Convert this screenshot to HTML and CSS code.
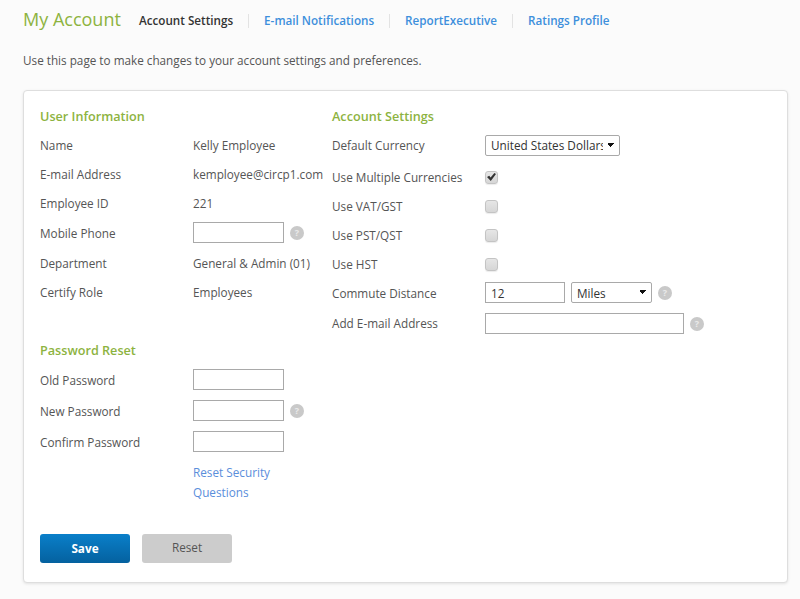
FILE: index.html
```html
<!DOCTYPE html>
<html lang="en">
<head>
<meta charset="utf-8">
<title>My Account</title>
<link rel="stylesheet" href="styles.css">
</head>
<body>
<header class="top">
  <h1 class="title">My Account</h1>
  <nav class="tabs">
    <a class="tab current">Account Settings</a>
    <a class="tab">E-mail Notifications</a>
    <a class="tab">ReportExecutive</a>
    <a class="tab">Ratings Profile</a>
  </nav>
</header>
<p class="intro">Use this page to make changes to your account settings and preferences.</p>
<main class="card">
  <div class="cols">
    <section class="col-left">
      <h2 class="head">User Information</h2>
      <div class="row r29"><span class="label">Name</span><span class="value">Kelly Employee</span></div>
      <div class="row r29"><span class="label">E-mail Address</span><span class="value">kemployee@circp1.com</span></div>
      <div class="row r29"><span class="label">Employee ID</span><span class="value">221</span></div>
      <div class="row r29"><span class="label low">Mobile Phone</span><input class="field short" type="text"><span class="help">?</span></div>
      <div class="row r31"><span class="label low">Department</span><span class="value low">General &amp; Admin (01)</span></div>
      <div class="row r29"><span class="label">Certify Role</span><span class="value">Employees</span></div>
      <h2 class="head second">Password Reset</h2>
      <div class="row r31"><span class="label low">Old Password</span><input class="field short" type="password"></div>
      <div class="row r31"><span class="label low">New Password</span><input class="field short" type="password"><span class="help">?</span></div>
      <div class="row r31"><span class="label low">Confirm Password</span><input class="field short" type="password"></div>
      <div class="links"><a class="link">Reset Security<br>Questions</a></div>
    </section>
    <section class="col-right">
      <h2 class="head">Account Settings</h2>
      <div class="row r29"><span class="label">Default Currency</span><select class="select currency"><option>United States Dollars</option></select></div>
      <div class="row r29 push"><span class="label">Use Multiple Currencies</span><input class="check" type="checkbox" checked></div>
      <div class="row r29"><span class="label">Use VAT/GST</span><input class="check" type="checkbox"></div>
      <div class="row r29"><span class="label">Use PST/QST</span><input class="check" type="checkbox"></div>
      <div class="row r29"><span class="label">Use HST</span><input class="check" type="checkbox"></div>
      <div class="row r27"><span class="label low">Commute Distance</span><input class="field dist" type="text" value="12"><select class="select miles"><option>Miles</option></select><span class="help">?</span></div>
      <div class="row r29 push"><span class="label">Add E-mail Address</span><input class="field email" type="text"><span class="help">?</span></div>
    </section>
  </div>
  <div class="actions">
    <button class="btn save" type="button">Save</button>
    <button class="btn reset" type="button">Reset</button>
  </div>
</main>
</body>
</html>
```
FILE: styles.css
```css
* { box-sizing: border-box; }
html, body { margin: 0; height: 599px; overflow: hidden; }
body {
  background: #fbfbfb;
  color: #555;
  font-family: "Open Sans", sans-serif;
  font-size: 11.75px;
  line-height: 16px;
}
.top {
  display: flex;
  align-items: flex-start;
  padding: 6px 0 0 23px;
  height: 36px;
}
.title {
  margin: 0;
  font-size: 18px;
  line-height: 26px;
  font-weight: 400;
  color: #8db33f;
  width: 116px;
}
.tabs { display: flex; margin-top: 8px; }
.tab {
  color: #3d8fdc;
  font-size: 11.68px;
  font-weight: 600;
  padding-right: 15px;
  margin-right: 15px;
  border-right: 1px solid #e3e3e3;
  line-height: 14px;
}
.tab:last-child { border-right: 0; }
.tab.current { color: #333; }
.intro {
  margin: 0;
  padding: 16px 0 0 23px;
  height: 54px;
  font-size: 11.72px;
}
.card {
  margin-left: 23px;
  width: 765px;
  height: 493px;
  background: #fff;
  border: 1px solid #dedede;
  border-radius: 4px;
  box-shadow: 0 1px 3px rgba(0,0,0,.1);
  padding: 16px 16px 0;
  display: flex;
  flex-direction: column;
}
.cols { display: flex; height: 427px; }
.col-left { width: 292px; }
.head {
  margin: 0;
  height: 24px;
  font-size: 12.65px;
  line-height: 18px;
  font-weight: 600;
  color: #8db33f;
}
.head.second { margin-top: 34px; height: 23px; }
.row { display: flex; align-items: center; }
.r27 { height: 27px; }
.r29 { height: 29px; }
.r31 { height: 31px; }
.push { margin-top: 3px; }
.label { width: 153px; flex: none; color: #555; padding-bottom: 2px; }
.value { padding-bottom: 2px; }
.label.low, .value.low { padding-bottom: 0; }
.field {
  height: 21px;
  border: 1px solid #a9a9a9;
  background: #fff;
  padding: 0 5px;
  font: inherit;
  color: #333;
  outline: 0;
  border-radius: 0;
}
.short { width: 91px; }
.dist { width: 80px; }
.email { width: 199px; }
.select {
  appearance: none;
  height: 21px;
  border: 1px solid #a9a9a9;
  border-radius: 2px;
  background-color: #fff;
  background-image:
    linear-gradient(45deg, transparent 50%, #111 50%),
    linear-gradient(-45deg, transparent 50%, #111 50%);
  background-size: 3px 5px;
  background-repeat: no-repeat;
  font: inherit;
  color: #333;
  padding: 0 16px 0 5px;
}
.currency {
  width: 135px;
  padding-bottom: 2px;
  background-position: 122px 7px, 125px 7px;
}
.miles {
  width: 81px;
  margin-left: 6px;
  background-position: 68px 7px, 71px 7px;
}
.check {
  appearance: none;
  display: block;
  position: relative;
  width: 13px;
  height: 13px;
  margin: 0;
  border: 1px solid #c4c4c4;
  border-radius: 3px;
  background: linear-gradient(#e6e6e6, #d6d6d6);
  box-shadow: 0 1px 1px rgba(0,0,0,.08);
}
.check:checked::after {
  content: "";
  position: absolute;
  left: 1px;
  top: 1px;
  width: 9px;
  height: 8px;
  background: #333;
  clip-path: polygon(0 50%, 25% 35%, 40% 55%, 82% 0, 100% 12%, 42% 100%);
}
.help {
  width: 14px;
  height: 14px;
  border-radius: 50%;
  background: #c9c9c9;
  color: #e9e9e9;
  font-size: 9px;
  font-weight: 700;
  line-height: 14px;
  text-align: center;
  margin-left: 6px;
}
.links {
  margin: 0 0 0 153px;
  padding-top: 5px;
  line-height: 20px;
}
.link { color: #5a8edb; }
.actions { display: flex; gap: 12px; }
.btn {
  width: 90px;
  height: 29px;
  border: 0;
  border-radius: 3px;
  font: inherit;
  padding: 0 0 2px;
}
.save {
  background: linear-gradient(#0a7fc9, #04619f);
  color: #fff;
  font-weight: 700;
}
.reset { background: #ccc; color: #555; padding-bottom: 4px; }
```
